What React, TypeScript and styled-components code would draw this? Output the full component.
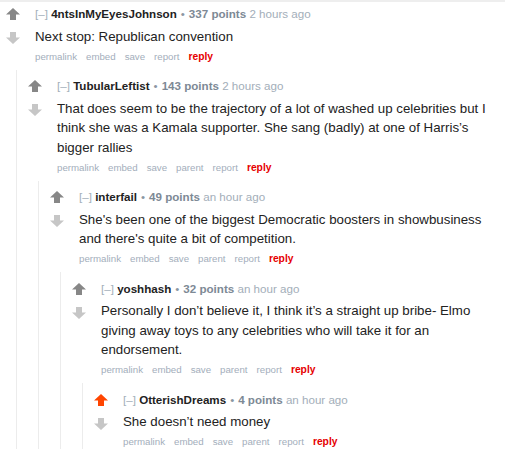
import React from "react";
import styled, { createGlobalStyle } from "styled-components";

const GlobalStyle = createGlobalStyle`
  html, body { margin: 0; padding: 0; background: #ffffff; }
  body { font-family: "Liberation Sans", Arial, Helvetica, sans-serif; }
`;

type CommentData = {
  author: string;
  points: number;
  time: string;
  body: string;
  parent?: boolean;
  upvoted?: boolean;
  children?: CommentData[];
};

const data: CommentData = {
  author: "4ntsInMyEyesJohnson",
  points: 337,
  time: "2 hours ago",
  body: "Next stop: Republican convention",
  children: [
    {
      author: "TubularLeftist",
      points: 143,
      time: "2 hours ago",
      parent: true,
      body:
        "That does seem to be the trajectory of a lot of washed up celebrities but I think she was a Kamala supporter. She sang (badly) at one of Harris’s bigger rallies",
      children: [
        {
          author: "interfail",
          points: 49,
          time: "an hour ago",
          parent: true,
          body:
            "She's been one of the biggest Democratic boosters in showbusiness and there's quite a bit of competition.",
          children: [
            {
              author: "yoshhash",
              points: 32,
              time: "an hour ago",
              parent: true,
              body:
                "Personally I don’t believe it, I think it’s a straight up bribe- Elmo giving away toys to any celebrities who will take it for an endorsement.",
              children: [
                {
                  author: "OtterishDreams",
                  points: 4,
                  time: "an hour ago",
                  parent: true,
                  upvoted: true,
                  body: "She doesn’t need money",
                },
              ],
            },
          ],
        },
      ],
    },
  ],
};

const Page = styled.div`
  border-top: 2px solid #eeeeee;
  padding: 4px 5px 0 0;
`;

const Comment = styled.div``;

const Row = styled.div`
  display: flex;
  padding-left: 6px;
`;

const VoteCol = styled.div`
  display: flex;
  flex-direction: column;
  align-items: center;
  width: 14px;
  flex: none;
  margin-right: 15px;
  padding-top: 2px;
  gap: 12px;
`;

const Entry = styled.div`
  flex: 1;
  min-width: 0;
`;

const Tagline = styled.div`
  font-size: 11.6px;
  line-height: 16px;
  color: #9aa6b2;
  white-space: nowrap;
`;

const Expand = styled.span`
  color: #a3afbb;
  font-weight: normal;
`;

const Author = styled.span`
  color: #222222;
  font-weight: bold;
`;

const Bullet = styled.span`
  color: #8a96a2;
  margin: 0 4px;
`;

const Score = styled.span`
  color: #7d8995;
  font-weight: bold;
`;

const Time = styled.span`
  color: #a3aeb9;
`;

const Body = styled.div`
  margin-top: 4.5px;
  font-size: 13.3px;
  line-height: 19.5px;
  color: #222222;
`;

const Links = styled.ul`
  list-style: none;
  margin: 3.5px 0 0;
  padding: 0;
  display: flex;
  gap: 9px;
  font-size: 9.7px;
  line-height: 14px;
`;

const LinkItem = styled.li<{ $accent?: boolean }>`
  color: ${(p) => (p.$accent ? "#e60000" : "#a3aebb")};
  font-weight: ${(p) => (p.$accent ? "bold" : "normal")};
  font-size: ${(p) => (p.$accent ? "10.3px" : "inherit")};
`;

const Children = styled.div`
  margin: 6px 0 0 16px;
  border-left: 1px solid #ececec;
  padding: 8.5px 0 0 5px;
`;

const Arrow: React.FC<{ dir: "up" | "down"; color: string }> = ({ dir, color }) => (
  <svg
    width="14"
    height="12"
    viewBox="0 0 14 12"
    style={{ display: "block", transform: dir === "down" ? "rotate(180deg)" : undefined }}
  >
    <path d="M7 0 L14 6.5 L10 6.5 L10 12 L4 12 L4 6.5 L0 6.5 Z" fill={color} />
  </svg>
);

const CommentView: React.FC<{ c: CommentData }> = ({ c }) => {
  const links = ["permalink", "embed", "save"];
  if (c.parent) links.push("parent");
  links.push("report");
  return (
    <Comment>
      <Row>
        <VoteCol>
          <Arrow dir="up" color={c.upvoted ? "#ff4500" : "#878787"} />
          <Arrow dir="down" color="#c6c6c6" />
        </VoteCol>
        <Entry>
          <Tagline>
            <Expand>[–]</Expand> <Author>{c.author}</Author>
            <Bullet>•</Bullet>
            <Score>{c.points} points</Score> <Time>{c.time}</Time>
          </Tagline>
          <Body>{c.body}</Body>
          <Links>
            {links.map((l) => (
              <LinkItem key={l}>{l}</LinkItem>
            ))}
            <LinkItem $accent>reply</LinkItem>
          </Links>
        </Entry>
      </Row>
      {c.children && c.children.length > 0 && (
        <Children>
          {c.children.map((ch) => (
            <CommentView key={ch.author} c={ch} />
          ))}
        </Children>
      )}
    </Comment>
  );
};

export default function App() {
  return (
    <>
      <GlobalStyle />
      <Page>
        <CommentView c={data} />
      </Page>
    </>
  );
}
